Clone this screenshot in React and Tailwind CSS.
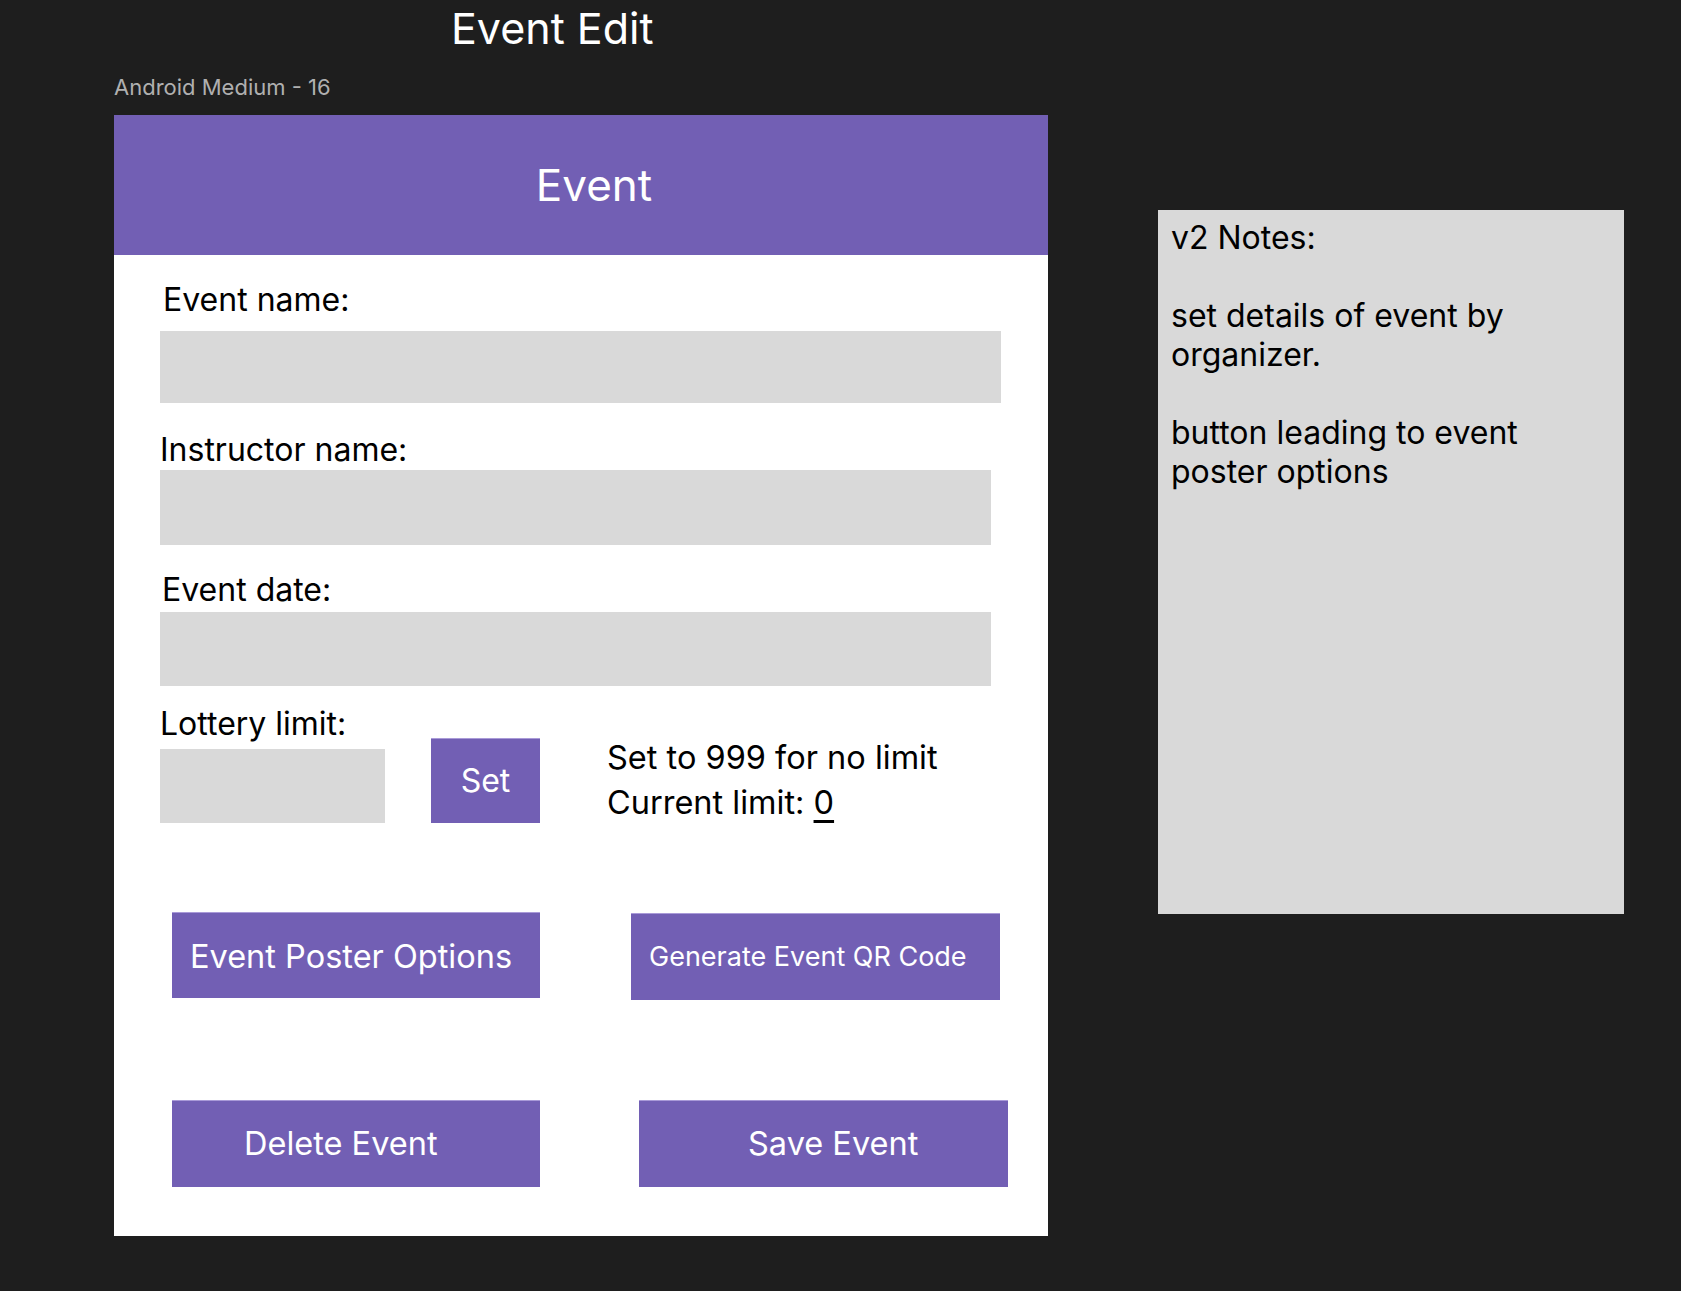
export default function App() {
  const label = "font-['Inter',sans-serif] text-[32px] leading-[40px] text-black";
  const field = "bg-[#d9d9d9]";
  const btn = "bg-[#725fb4] border-t border-[#a99ad8] text-white flex items-center";

  return (
    <div className="h-[1291px] w-full overflow-hidden bg-[#1e1e1e] font-['Inter',sans-serif]">
      <h1 className="pl-[451px] text-[43px] leading-[56px] font-normal text-white">Event Edit</h1>

      <div className="mt-[19px] flex items-start pl-[114px]">
        {/* Phone frame */}
        <div className="flex flex-col">
          <div className="text-[22px] leading-[24px] text-[#b0b0b0]">Android Medium - 16</div>

          <div className="mt-[16px] flex h-[1121px] w-[934px] flex-col bg-white">
            <div className="flex h-[140px] items-center justify-center bg-[#725fb4] pl-[26px] text-[44px] text-white">
              Event
            </div>

            <div className="flex flex-col pl-[46px]">
              <div className={`${label} mt-[25px] pl-[3px]`}>Event name:</div>
              <div className={`${field} mt-[11px] h-[72px] w-[841px]`} />

              <div className={`${label} mt-[27px]`}>Instructor name:</div>
              <div className={`${field} h-[75px] w-[831px]`} />

              <div className={`${label} mt-[25px] pl-[2px]`}>Event date:</div>
              <div className={`${field} mt-[2px] h-[74px] w-[831px]`} />

              <div className="mt-[22px] font-['Inter',sans-serif] text-[32px] leading-[32px] text-black">Lottery limit:</div>

              <div className="-mt-[2px] flex h-[85px] items-start">
                <div className={`${field} mt-[11px] h-[74px] w-[225px]`} />
                <div className={`${btn} ml-[46px] h-[85px] w-[109px] justify-center text-[32px]`}>Set</div>
                <div className="-mt-[3px] ml-[67px] text-[32.5px] leading-[45px] text-black">
                  <div>Set to 999 for no limit</div>
                  <div>
                    Current limit: <span className="underline underline-offset-[6px]">0</span>
                  </div>
                </div>
              </div>

              <div className="mt-[89px] flex items-start">
                <div className={`${btn} ml-[12px] h-[86px] w-[368px] pl-[18px] pt-[3px] text-[32.5px]`}>Event Poster Options</div>
                <div className={`${btn} mt-[1px] ml-[91px] h-[87px] w-[369px] pl-[18px] text-[27px]`}>Generate Event QR Code</div>
              </div>

              <div className="mt-[100px] flex items-start">
                <div className={`${btn} ml-[12px] h-[87px] w-[368px] pl-[72px] text-[32.5px]`}>Delete Event</div>
                <div className={`${btn} ml-[99px] h-[87px] w-[369px] pl-[109px] text-[32.5px]`}>Save Event</div>
              </div>
            </div>
          </div>
        </div>

        {/* Notes */}
        <div className="mt-[135px] ml-[110px] h-[704px] w-[466px] bg-[#d9d9d9] pt-[8px] pl-[13px] pr-[40px] text-[32px] leading-[39px] text-black">
          <p>v2 Notes:</p>
          <p>&nbsp;</p>
          <p>set details of event by organizer.</p>
          <p>&nbsp;</p>
          <p>button leading to event poster options</p>
        </div>
      </div>
    </div>
  );
}
